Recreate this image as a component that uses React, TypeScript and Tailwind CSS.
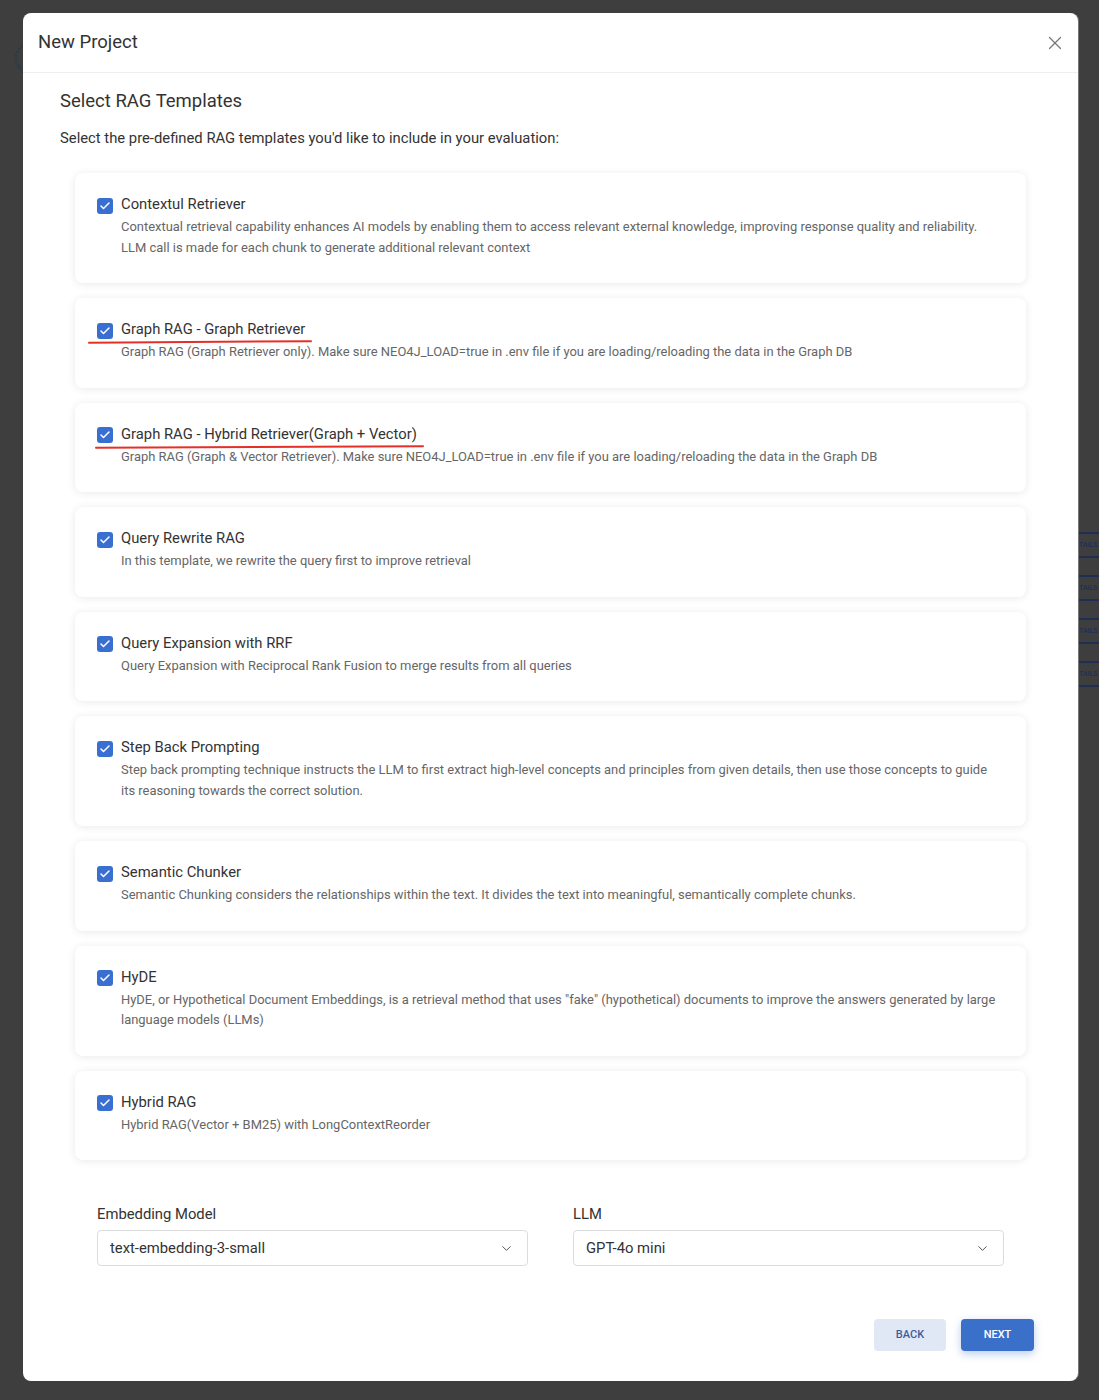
import { X, ChevronDown, Check } from "lucide-react";

const templates = [
  {
    title: "Contextul Retriever",
    desc: "Contextual retrieval capability enhances AI models by enabling them to access relevant external knowledge, improving response quality and reliability. LLM call is made for each chunk to generate additional relevant context",
  },
  {
    title: "Graph RAG - Graph Retriever",
    desc: "Graph RAG (Graph Retriever only). Make sure NEO4J_LOAD=true in .env file if you are loading/reloading the data in the Graph DB",
    mark: "left-[13px] w-[224px] -rotate-[0.4deg]",
  },
  {
    title: "Graph RAG - Hybrid Retriever(Graph + Vector)",
    desc: "Graph RAG (Graph & Vector Retriever). Make sure NEO4J_LOAD=true in .env file if you are loading/reloading the data in the Graph DB",
    mark: "left-[20px] w-[329px] -rotate-[0.3deg]",
  },
  {
    title: "Query Rewrite RAG",
    desc: "In this template, we rewrite the query first to improve retrieval",
  },
  {
    title: "Query Expansion with RRF",
    desc: "Query Expansion with Reciprocal Rank Fusion to merge results from all queries",
  },
  {
    title: "Step Back Prompting",
    desc: "Step back prompting technique instructs the LLM to first extract high-level concepts and principles from given details, then use those concepts to guide its reasoning towards the correct solution.",
  },
  {
    title: "Semantic Chunker",
    desc: "Semantic Chunking considers the relationships within the text. It divides the text into meaningful, semantically complete chunks.",
  },
  {
    title: "HyDE",
    desc: 'HyDE, or Hypothetical Document Embeddings, is a retrieval method that uses "fake" (hypothetical) documents to improve the answers generated by large language models (LLMs)',
  },
  {
    title: "Hybrid RAG",
    desc: "Hybrid RAG(Vector + BM25) with LongContextReorder",
  },
];

const TemplateCard = ({ title, desc, mark }: { title: string; desc: string; mark?: string }) => (
  <div className="relative bg-white rounded-lg shadow-[0_1px_8px_rgba(0,0,0,0.09)] pl-[22px] pr-[24px] pt-[21px] pb-[25px]">
    <div className="flex items-center gap-2">
      <span className="w-4 h-4 mt-[3px] rounded-[3px] bg-[#3a6fd2] flex items-center justify-center shrink-0">
        <Check size={12} strokeWidth={3} className="text-white" />
      </span>
      <span className="text-[14.8px] leading-5 text-[#333]">{title}</span>
    </div>
    <p className="ml-6 mt-[3px] text-[12.95px] leading-[20.5px] text-[#666]">{desc}</p>
    {mark && <span className={`absolute top-[43px] h-[2px] bg-[#e5302a] rounded-full ${mark}`} />}
  </div>
);

const Select = ({ label, value }: { label: string; value: string }) => (
  <div className="flex-1">
    <div className="text-[14.8px] leading-5 text-[#333]">{label}</div>
    <div className="mt-[6px] h-9 border border-[#dcdcdc] rounded flex items-center justify-between pl-3 pr-[13px]">
      <span className="text-[14.8px] text-[#333]">{value}</span>
      <ChevronDown size={15} strokeWidth={1.6} className="text-[#555]" />
    </div>
  </div>
);

export default function App() {
  return (
    <div className="relative min-h-[1400px] bg-[#3e3e3e] pt-[13px] pl-[23px] font-['Roboto',sans-serif]">
      {/* page behind the overlay */}
      <svg className="absolute left-[12px] top-[40px]" width="36" height="36" viewBox="0 0 36 36">
        <circle cx="18" cy="18" r="14" fill="none" stroke="#2b3c47" strokeWidth="3" strokeDasharray="2 1.5" />
      </svg>
      <div className="absolute left-[1078px] right-0 top-[532px] flex flex-col gap-[17px]">
        {[0, 1, 2, 3].map((i) => (
          <div key={i} className="h-[26px] border-y-2 border-[#1f2f54] flex items-center text-[7px] font-medium text-[#1f2f54] overflow-hidden">
            <span className="pl-[1px]">TAILS</span>
          </div>
        ))}
      </div>

      <div className="relative w-[1055px] h-[1368px] bg-white rounded-lg shadow-[1px_0_0_#777]">
        <div className="h-[60px] border-b border-[#eeeeee] flex items-center justify-between pl-[15px] pr-[12px]">
          <h1 className="text-[18.5px] text-[#333]">New Project</h1>
          <X size={22} strokeWidth={1.3} className="text-[#777]" />
        </div>

        <div className="px-[37px] pt-[16px]">
          <h2 className="text-[18.5px] leading-6 text-[#333]">Select RAG Templates</h2>
          <p className="mt-[15px] text-[14.8px] leading-5 text-[#333]">
            Select the pre-defined RAG templates you'd like to include in your evaluation:
          </p>

          <div className="mt-[25px] mx-[15px] flex flex-col gap-[15px]">
            {templates.map((t) => (
              <TemplateCard key={t.title} {...t} />
            ))}
          </div>

          <div className="mt-[44px] mx-[37px] flex gap-[45px]">
            <Select label="Embedding Model" value="text-embedding-3-small" />
            <Select label="LLM" value="GPT-4o mini" />
          </div>

          <div className="mt-[53px] mr-[7px] flex justify-end gap-[15px]">
            <button className="w-[72px] h-8 rounded bg-[#e1e8f5] text-[11px] font-medium text-[#3d5d9a]">BACK</button>
            <button className="w-[73px] h-8 rounded bg-[#3a70c9] text-[11px] font-medium text-white shadow-[0_3px_8px_rgba(58,112,201,0.35)]">
              NEXT
            </button>
          </div>
        </div>
      </div>
    </div>
  );
}
